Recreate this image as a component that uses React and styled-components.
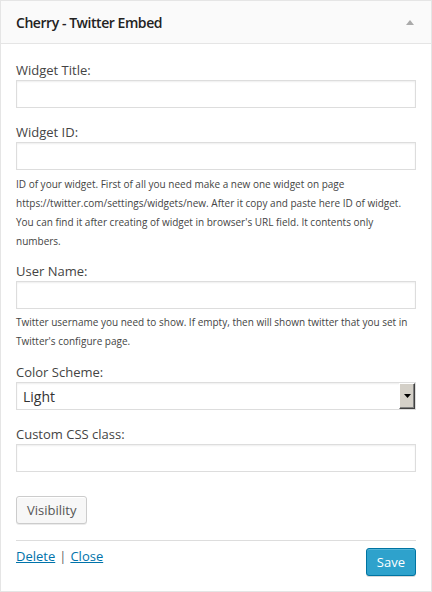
import styled, { createGlobalStyle } from 'styled-components';

const Global = createGlobalStyle`
  html, body {
    margin: 0;
    padding: 0;
    background: #fff;
  }
  body {
    font-family: "Open Sans", "Liberation Sans", sans-serif;
    color: #444;
  }
`;

const App = () => {
  return (
    <>
      <Global />
      <Widget>
        <Header>
          <h3>Cherry - Twitter Embed</h3>
          <Toggle />
        </Header>
        <Body>
          <Field>
            <Label>Widget Title:</Label>
            <Input type="text" />
          </Field>
          <Field>
            <Label>Widget ID:</Label>
            <Input type="text" />
            <Note>
              ID of your widget. First of all you need make a new one widget on
              page https://twitter.com/settings/widgets/new. After it copy and
              paste here ID of widget. You can find it after creating of widget
              in browser's URL field. It contents only numbers.
            </Note>
          </Field>
          <Field $gap={10}>
            <Label>User Name:</Label>
            <Input type="text" />
            <Note $top={4}>
              Twitter username you need to show. If empty, then will shown
              twitter that you set in Twitter's configure page.
            </Note>
          </Field>
          <Field $gap={11}>
            <Label>Color Scheme:</Label>
            <SelectBox>
              <span>Light</span>
              <ArrowButton>
                <svg width="7" height="4" viewBox="0 0 7 4">
                  <path d="M0 0h7L3.5 4z" fill="#000" />
                </svg>
              </ArrowButton>
            </SelectBox>
          </Field>
          <Field $gap={14}>
            <Label>Custom CSS class:</Label>
            <Input type="text" />
          </Field>
          <Visibility>Visibility</Visibility>
          <Footer>
            <Links>
              <a href="#delete">Delete</a>
              <Sep>|</Sep>
              <a href="#close">Close</a>
            </Links>
            <SaveButton>Save</SaveButton>
          </Footer>
        </Body>
      </Widget>
    </>
  );
};

export default App;

const Widget = styled.div`
  width: 432px;
  height: 592px;
  box-sizing: border-box;
  border: 1px solid #e5e5e5;
  background: #fff;
`;

const Header = styled.div`
  height: 42px;
  background: #fafafa;
  border-bottom: 1px solid #e5e5e5;
  display: flex;
  align-items: center;
  justify-content: space-between;
  padding: 0 15px;

  h3 {
    margin: 0;
    font-size: 14px;
    font-weight: 600;
    letter-spacing: -0.45px;
    color: #222;
  }
`;

const Toggle = styled.span`
  width: 0;
  height: 0;
  margin-right: 2px;
  border-left: 4px solid transparent;
  border-right: 4px solid transparent;
  border-bottom: 5px solid #aaa;
`;

const Body = styled.div`
  padding: 16px 15px 0;
`;

const Field = styled.div`
  display: flex;
  flex-direction: column;
  margin-top: ${(p) => p.$gap ?? 14}px;

  &:first-child {
    margin-top: 0;
  }
`;

const Label = styled.label`
  font-size: 13px;
  line-height: 20px;
  color: #444;
`;

const Input = styled.input`
  box-sizing: border-box;
  width: 400px;
  height: 28px;
  margin: 0;
  border: 1px solid #ddd;
  box-shadow: inset 0 1px 2px rgba(0, 0, 0, 0.07);
  background: #fff;
  outline: none;
`;

const Note = styled.p`
  margin: ${(p) => p.$top ?? 5}px 0 0;
  font-size: 10px;
  line-height: 19px;
  color: #444;
`;

const SelectBox = styled.div`
  box-sizing: border-box;
  width: 400px;
  height: 28px;
  border: 1px solid #ddd;
  display: flex;
  align-items: center;
  justify-content: space-between;
  padding-left: 6px;
  box-shadow: inset 0 1px 2px rgba(0, 0, 0, 0.07);

  span {
    font-size: 14px;
    color: #333;
  }
`;

const ArrowButton = styled.span`
  box-sizing: border-box;
  width: 16px;
  height: 26px;
  background: #d4d0c8;
  border-top: 1px solid #fff;
  border-left: 1px solid #fff;
  border-right: 1px solid #404040;
  border-bottom: 1px solid #404040;
  box-shadow: inset -1px -1px 0 #808080;
  display: flex;
  align-items: center;
  justify-content: center;
`;

const Visibility = styled.button`
  margin-top: 24px;
  height: 28px;
  padding: 0 10px;
  font-family: inherit;
  font-size: 13px;
  color: #555;
  background: #f7f7f7;
  border: 1px solid #ccc;
  border-radius: 3px;
  box-shadow: inset 0 1px 0 #fff, 0 1px 0 rgba(0, 0, 0, 0.08);
`;

const Footer = styled.div`
  margin-top: 16px;
  border-top: 1px solid #ddd;
  display: flex;
  justify-content: space-between;
  padding-top: 6px;
`;

const Links = styled.div`
  font-size: 13px;
  line-height: 18px;

  a {
    color: #0073aa;
    text-decoration: underline;
  }
`;

const Sep = styled.span`
  color: #666;
  margin: 0 4px;
`;

const SaveButton = styled.button`
  margin-top: 1px;
  height: 28px;
  padding: 0 10px;
  font-family: inherit;
  font-size: 13px;
  color: #fff;
  background: #2ea2cc;
  border: 1px solid #0074a2;
  border-radius: 3px;
  box-shadow: inset 0 1px 0 rgba(120, 200, 230, 0.5), 0 1px 0 rgba(0, 0, 0, 0.15);
`;
